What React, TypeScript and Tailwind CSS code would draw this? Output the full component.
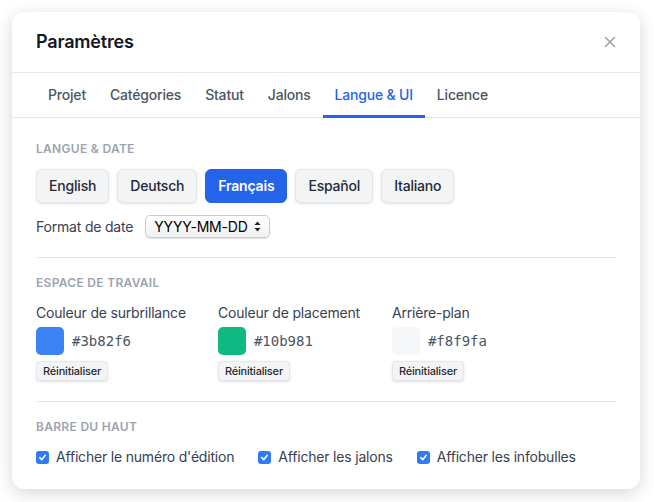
import { useState } from "react";

const tabs = ["Projet", "Catégories", "Statut", "Jalons", "Langue & UI", "Licence"];
const languages = ["English", "Deutsch", "Français", "Español", "Italiano"];

const colors = [
  { label: "Couleur de surbrillance", value: "#3b82f6", swatch: "bg-[#3b82f6]" },
  { label: "Couleur de placement", value: "#10b981", swatch: "bg-[#10b981]" },
  { label: "Arrière-plan", value: "#f8f9fa", swatch: "bg-[#f6f7f8]" },
];

const toggles = [
  "Afficher le numéro d'édition",
  "Afficher les jalons",
  "Afficher les infobulles",
];

function SectionTitle({ children }: { children: string }) {
  return (
    <h3 className="mb-3 text-xs leading-4 font-semibold uppercase tracking-wide text-[#9ca3af]">
      {children}
    </h3>
  );
}

function Checkbox() {
  return (
    <span className="flex h-[13px] w-[13px] items-center justify-center rounded-[3px] bg-[#2f7af6]">
      <svg width="9" height="9" viewBox="0 0 10 10" fill="none">
        <path d="M2 5.2 4.1 7.4 8 2.6" stroke="white" strokeWidth="1.8" strokeLinecap="round" strokeLinejoin="round" />
      </svg>
    </span>
  );
}

export default function App() {
  const [lang, setLang] = useState("Français");

  return (
    <div className="min-h-[502px] bg-white p-3 font-['Inter',sans-serif] tracking-[-0.012em] text-[#1f2937]">
      <div className="w-[628px] rounded-xl bg-white shadow-[0_4px_18px_rgba(0,0,0,0.16)]">
        {/* header */}
        <div className="flex items-center justify-between border-b border-[#e5e7eb] px-6 py-4">
          <h2 className="text-lg leading-7 font-semibold text-[#111827]">Paramètres</h2>
          <button className="text-[#9ca3af]">
            <svg width="12" height="12" viewBox="0 0 12 12" fill="none">
              <path d="M1.5 1.5l9 9M10.5 1.5l-9 9" stroke="currentColor" strokeWidth="1.6" strokeLinecap="round" />
            </svg>
          </button>
        </div>

        {/* tabs */}
        <div className="flex border-b border-[#e5e7eb] px-6">
          {tabs.map((t) => (
            <button
              key={t}
              className={
                t === "Langue & UI"
                  ? "-mb-px border-b-[3px] border-[#2563eb] px-3 pt-3 pb-[10px] text-sm leading-5 font-medium text-[#2563eb]"
                  : "-mb-px border-b-[3px] border-transparent px-3 pt-3 pb-[10px] text-sm leading-5 font-medium text-[#4b5563]"
              }
            >
              {t}
            </button>
          ))}
        </div>

        <div className="px-6 pt-[7px] pb-1">
          {/* langue & date */}
          <section className="border-b border-[#e5e7eb] pt-4 pb-[19px]">
            <SectionTitle>Langue &amp; date</SectionTitle>
            <div className="flex gap-2">
              {languages.map((l) => (
                <button
                  key={l}
                  onClick={() => setLang(l)}
                  className={
                    l === lang
                      ? "rounded-md border border-[#2563eb] bg-[#2563eb] px-3 py-1.5 text-sm leading-5 font-semibold text-white"
                      : "rounded-md border border-[#e5e7eb] bg-[#f3f4f6] px-3 py-1.5 text-sm leading-5 font-medium text-[#1f2937] shadow-sm"
                  }
                >
                  {l}
                </button>
              ))}
            </div>
            <div className="mt-3 flex items-center gap-3">
              <span className="text-sm text-[#374151]">Format de date</span>
              <div className="flex h-[23px] w-[125px] items-center justify-between rounded-[5px] border border-[#c9cbcf] bg-gradient-to-b from-white to-[#f1f1f1] pr-2 pl-2 text-sm text-black shadow-[0_1px_1px_rgba(0,0,0,0.12)]">
                <span>YYYY-MM-DD</span>
                <svg width="7" height="11" viewBox="0 0 7 11">
                  <path d="M3.5 0.5 6.5 4H0.5Z M3.5 10.5 0.5 7H6.5Z" fill="#222" />
                </svg>
              </div>
            </div>
          </section>

          {/* espace de travail */}
          <section className="border-b border-[#e5e7eb] pt-[17px] pb-5">
            <SectionTitle>Espace de travail</SectionTitle>
            <div className="flex gap-8">
              {colors.map((c) => (
                <div key={c.label}>
                  <div className="mb-1 text-sm leading-5 text-[#374151]">{c.label}</div>
                  <div className="flex items-center gap-2">
                    <span className={`h-7 w-7 rounded-[5px] ${c.swatch}`} />
                    <span className="font-['DejaVu_Sans_Mono',monospace] text-sm tracking-normal text-[#4b5563]">{c.value}</span>
                  </div>
                  <button className="mt-1.5 rounded border border-[#e5e7eb] bg-[#f3f4f6] px-1.5 py-[1px] text-[11px] leading-4 font-medium text-[#1f2937] shadow-sm">
                    Réinitialiser
                  </button>
                </div>
              ))}
            </div>
          </section>

          {/* barre du haut */}
          <section className="pt-[17px] pb-[18px]">
            <SectionTitle>Barre du haut</SectionTitle>
            <div className="flex gap-6">
              {toggles.map((t) => (
                <label key={t} className="flex items-center gap-[7px] text-sm leading-5 text-[#374151]">
                  <Checkbox />
                  {t}
                </label>
              ))}
            </div>
          </section>
        </div>
      </div>
    </div>
  );
}
